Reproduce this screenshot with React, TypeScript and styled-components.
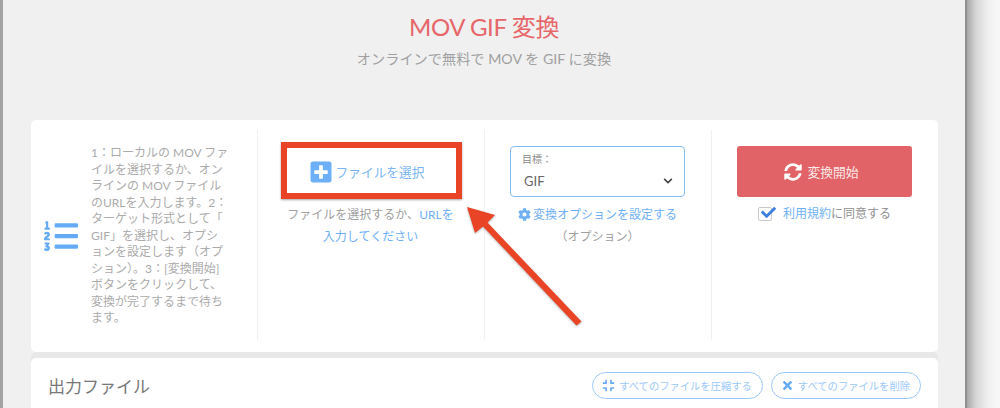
import styled, { createGlobalStyle } from "styled-components";
import {
  FaListOl,
  FaPlusSquare,
  FaCog,
  FaSyncAlt,
  FaCheck,
  FaCompress,
  FaTimes,
  FaChevronDown,
} from "react-icons/fa";

const GlobalStyle = createGlobalStyle`
  html, body {
    margin: 0;
    padding: 0;
    width: 1000px;
    height: 408px;
    overflow: hidden;
    background: #f7f7f7;
    font-family: Lato, "Noto Sans CJK JP", sans-serif;
  }
`;

function App() {
  return (
    <>
      <GlobalStyle />
      <Page>
        <Window>
          <Title>MOV GIF 変換</Title>
          <Subtitle>オンラインで無料で MOV を GIF に変換</Subtitle>
          <Card>
            <StepsColumn>
              <ListIcon>
                <FaListOl />
              </ListIcon>
              <StepsText>
                1：ローカルの MOV ファ
                <br />
                イルを選択するか、オン
                <br />
                ラインの MOV ファイル
                <br />
                のURLを入力します。2：
                <br />
                ターゲット形式として「
                <br />
                GIF」を選択し、オプシ
                <br />
                ョンを設定します（オプ
                <br />
                ション）。3：[変換開始]
                <br />
                ボタンをクリックして、
                <br />
                変換が完了するまで待ち
                <br />
                ます。
              </StepsText>
            </StepsColumn>
            <Column>
              <SelectButton>
                <PlusIcon />
                ファイルを選択
              </SelectButton>
              <Hint>
                ファイルを選択するか、<Link>URLを</Link>
                <br />
                <Link>入力してください</Link>
              </Hint>
            </Column>
            <Column>
              <TargetBox>
                <TargetLabel>目標：</TargetLabel>
                <TargetValue>
                  GIF
                  <FaChevronDown />
                </TargetValue>
              </TargetBox>
              <Hint>
                <Link>
                  <GearIcon />
                  変換オプションを設定する
                </Link>
                <br />
                （オプション）
              </Hint>
            </Column>
            <Column>
              <StartButton>
                <FaSyncAlt />
                変換開始
              </StartButton>
              <Terms>
                <CheckBox>
                  <FaCheck />
                </CheckBox>
                <span>
                  <Link>利用規約</Link>に同意する
                </span>
              </Terms>
            </Column>
          </Card>
          <OutputCard>
            <OutputTitle>出力ファイル</OutputTitle>
            <PillGroup>
              <Pill>
                <FaCompress />
                すべてのファイルを圧縮する
              </Pill>
              <Pill>
                <FaTimes />
                すべてのファイルを削除
              </Pill>
            </PillGroup>
          </OutputCard>
          <RedBox />
          <Arrow viewBox="0 0 140 140">
            <path d="M2 5 L30 13 L22.5 20.5 L116.5 119.5 L111.5 123.5 L18 24.5 L10 31 Z" />
          </Arrow>
        </Window>
      </Page>
    </>
  );
}

export default App;

const Page = styled.div`
  width: 1000px;
  height: 408px;
  overflow: hidden;
  background: linear-gradient(90deg, #a8a8a8 967px, #d6d6d6 976px, #f0f0f0 988px, #f7f7f7 997px);
`;

const Window = styled.div`
  position: relative;
  box-sizing: border-box;
  width: 967px;
  height: 408px;
  padding: 0 28px;
  background: #f0f0f0;
  border-left: 3px solid #a3a3a3;
  border-right: 2px solid #8f8f8f;
  overflow: hidden;
`;

const Title = styled.h1`
  margin: 0;
  padding-top: 10px;
  height: 34px;
  font-size: 24px;
  letter-spacing: -0.4px;
  line-height: 34px;
  font-weight: 400;
  text-align: center;
  color: #e66669;
`;

const Subtitle = styled.p`
  margin: 4px 0 0;
  height: 22px;
  font-size: 14.2px;
  line-height: 22px;
  text-align: center;
  color: #a0a0a0;
`;

const Card = styled.div`
  display: grid;
  grid-template-columns: 226px repeat(3, 227px);
  width: 907px;
  height: 232px;
  margin-top: 50px;
  background: #fff;
  border-radius: 5px;
`;

const Column = styled.div`
  display: flex;
  flex-direction: column;
  align-items: center;
  padding: 16px 1px 0 0;
  margin: 10px 0 12px;
  border-left: 1px solid #f0f0f0;
  box-sizing: border-box;
`;

const StepsColumn = styled.div`
  display: flex;
  align-items: center;
  padding-left: 13px;
`;

const ListIcon = styled.div`
  width: 47px;
  display: flex;
  color: #64aaf5;
  font-size: 34px;
`;

const StepsText = styled.p`
  margin: 0;
  font-size: 12px;
  line-height: 16.5px;
  color: #ababab;
  white-space: nowrap;
`;

const SelectButton = styled.div`
  display: flex;
  align-items: center;
  gap: 3px;
  height: 51px;
  padding-right: 8px;
  font-size: 12.7px;
  color: #7ab6f6;
`;

const PlusIcon = styled(FaPlusSquare)`
  font-size: 24px;
  color: #6db0f7;
`;

const Hint = styled.p`
  margin: 7px 0 0;
  font-size: 12px;
  line-height: 22px;
  color: #a0a0a0;
  text-align: center;
  white-space: nowrap;
`;

const Link = styled.span`
  color: #6fb0f5;
`;

const GearIcon = styled(FaCog)`
  vertical-align: -2px;
  font-size: 13px;
  margin-right: 2px;
`;

const TargetBox = styled.div`
  box-sizing: border-box;
  width: 175px;
  height: 51px;
  padding: 5px 11px 0;
  border: 1px solid #86bdf7;
  border-radius: 4px;
`;

const TargetLabel = styled.div`
  font-size: 10px;
  line-height: 14px;
  color: #888;
`;

const TargetValue = styled.div`
  display: flex;
  align-items: center;
  justify-content: space-between;
  margin-top: 5px;
  padding-left: 2px;
  font-size: 13px;
  line-height: 20px;
  color: #666;

  svg {
    font-size: 10px;
    color: #444;
  }
`;

const StartButton = styled.div`
  display: flex;
  align-items: center;
  justify-content: center;
  gap: 5px;
  box-sizing: border-box;
  width: 175px;
  height: 51px;
  padding-right: 6px;
  font-size: 12.8px;
  color: #fbe9e9;
  background: #e16367;
  border-radius: 3px;

  svg {
    font-size: 18px;
    color: #fff;
  }
`;

const Terms = styled.div`
  display: flex;
  align-items: center;
  gap: 11px;
  margin-top: 5px;
  font-size: 12px;
  line-height: 24px;
  color: #8f8f8f;
`;

const CheckBox = styled.div`
  position: relative;
  box-sizing: border-box;
  width: 14px;
  height: 14px;
  border: 1px solid #c9c9c9;
  border-radius: 2px;
  background: #fff;

  svg {
    position: absolute;
    left: 2px;
    top: -3px;
    font-size: 15px;
    color: #3d7fe0;
  }
`;

const OutputCard = styled.div`
  display: flex;
  align-items: center;
  justify-content: space-between;
  box-sizing: border-box;
  width: 907px;
  height: 70px;
  margin-top: 6px;
  padding: 0 17px 16px 17px;
  background: #fff;
  border-radius: 5px;
  box-shadow: 0 -6px 0 #e8e8e8;
`;

const OutputTitle = styled.h2`
  margin: 0;
  font-size: 17px;
  font-weight: 400;
  color: #777;
`;

const PillGroup = styled.div`
  display: flex;
  gap: 8px;
`;

const Pill = styled.div`
  display: flex;
  align-items: center;
  gap: 4px;
  box-sizing: border-box;
  height: 27px;
  padding: 0 10px 0 9px;
  font-size: 10.3px;
  color: #9cc8f8;
  border: 1px solid #9cc8f8;
  border-radius: 14px;
  white-space: nowrap;

  svg {
    font-size: 13px;
    color: #64aaf5;
  }
`;

const RedBox = styled.div`
  position: absolute;
  left: 278px;
  top: 142px;
  box-sizing: border-box;
  width: 181px;
  height: 57px;
  border: 6px solid #e94426;
  box-shadow: 0 1px 2px rgba(0, 0, 0, 0.35);
`;

const Arrow = styled.svg`
  position: absolute;
  left: 462px;
  top: 202px;
  width: 140px;
  height: 140px;
  overflow: visible;

  path {
    fill: #e94426;
    filter: drop-shadow(0 1px 1px rgba(0, 0, 0, 0.3));
  }
`;
